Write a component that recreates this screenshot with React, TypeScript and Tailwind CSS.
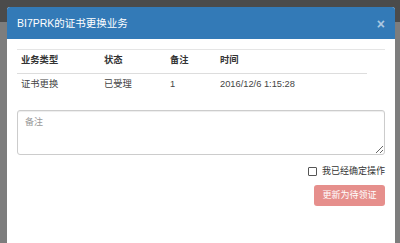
export default function App() {
  const font = { fontFamily: '"Liberation Sans", "Noto Sans CJK SC", sans-serif' };
  return (
    <div
      className="w-[400px] h-[243px] overflow-hidden bg-[linear-gradient(#4b4b4b_0px,#4b4b4b_22px,#7d7d7d_22px)] pt-[7px] pl-[7px]"
      style={font}
    >
      <div className="w-[388px] h-[236px] bg-white rounded-t-[3px] overflow-hidden">
        {/* header */}
        <div className="h-[32px] bg-[#337ab7] flex items-center justify-between pl-[10px] pr-[10px]">
          <span className="text-[10.5px] text-white leading-none">BI7PRK的证书更换业务</span>
          <span className="text-[14px] font-bold text-white/60 leading-none mt-[2px]">×</span>
        </div>

        {/* body */}
        <div className="px-[10px] pt-[10px]">
          <div className="border-t border-[#e5e5e5]">
            <table className="w-[350px] text-[9.3px] text-[#333] border-collapse">
              <thead>
                <tr className="h-[23px] border-b border-[#ddd]">
                  <th className="w-[83px] text-left font-bold pl-[4px]">业务类型</th>
                  <th className="w-[66px] text-left font-bold pl-[4px]">状态</th>
                  <th className="w-[50px] text-left font-bold pl-[4px]">备注</th>
                  <th className="text-left font-bold pl-[4px]">时间</th>
                </tr>
              </thead>
              <tbody>
                <tr className="h-[23px] text-[#444]">
                  <td className="pl-[4px]">证书更换</td>
                  <td className="pl-[4px]">已受理</td>
                  <td className="pl-[4px]">1</td>
                  <td className="pl-[4px]">2016/12/6 1:15:28</td>
                </tr>
              </tbody>
            </table>
          </div>

          <textarea
            placeholder="备注"
            className="mt-[14px] block w-[368px] h-[45px] border border-[#ccc] rounded-[3px] px-[7px] py-[5px] text-[9px] placeholder-[#999] shadow-[inset_0_1px_1px_rgba(0,0,0,0.075)] resize-y outline-none"
          />

          <div className="flex justify-end items-center mt-[12px] gap-[5px]">
            <span className="w-[9px] h-[9px] border border-[#555] rounded-[1px] bg-white" />
            <span className="text-[9px] text-[#333] leading-none">我已经确定操作</span>
          </div>

          <div className="flex justify-end mt-[9px]">
            <button className="w-[71px] h-[21px] rounded-[3px] bg-[#e68f8c] text-white text-[9px] leading-none">
              更新为待领证
            </button>
          </div>
        </div>
      </div>
    </div>
  );
}
